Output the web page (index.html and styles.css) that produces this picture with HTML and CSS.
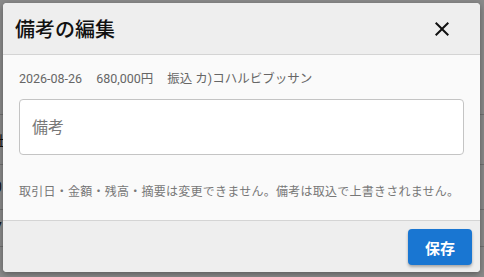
FILE: index.html
```html
<!DOCTYPE html>
<html lang="ja">
<head>
    <meta charset="UTF-8">
    <meta name="viewport" content="width=device-width, initial-scale=1.0">
    <title>備考の編集</title>
    <link rel="stylesheet" href="styles.css">
</head>
<body>

    <!-- page behind the dialog -->
    <div class="page">
        <div class="row" style="height: 115px"></div>
        <div class="row" style="height: 50px"><span>士</span></div>
        <div class="row" style="height: 45px"><span>0</span></div>
        <div class="row" style="height: 37px"><span>7</span></div>
    </div>

    <div class="overlay">
        <div class="dialog">
            <div class="dialog-header">
                <h2 class="dialog-title">備考の編集</h2>
                <button class="close-btn" aria-label="閉じる">
                    <svg width="24" height="24" viewBox="0 0 24 24">
                        <path d="M19 6.41 17.59 5 12 10.59 6.41 5 5 6.41 10.59 12 5 17.59 6.41 19 12 13.41 17.59 19 19 17.59 13.41 12z" fill="#111"/>
                    </svg>
                </button>
            </div>

            <div class="dialog-body">
                <div class="meta">
                    <span>2026-08-26</span>
                    <span>680,000円</span>
                    <span>振込 カ)コハルビブッサン</span>
                </div>
                <input class="memo-input" type="text" placeholder="備考">
                <p class="note">取引日・金額・残高・摘要は変更できません。備考は取込で上書きされません。</p>
            </div>

            <div class="dialog-footer">
                <button class="save-btn">保存</button>
            </div>
        </div>
    </div>

</body>
</html>
```

FILE: styles.css
```css
body {
    margin: 0;
    font-family: Roboto, "Noto Sans CJK JP", sans-serif;
    background: #ffffff;
    width: 484px;
    height: 277px;
    overflow: hidden;
    position: relative;
}
.page {
    font-size: 14px;
    color: #222;
}
.row {
    border-bottom: 1px solid #d0d0d0;
    box-sizing: border-box;
    display: flex;
    align-items: center;
}
.row span {
    margin-left: -6px;
}
.overlay {
    position: absolute;
    inset: 0;
    background: rgba(0, 0, 0, 0.46);
    padding: 3px 4px 5px 3px;
    box-sizing: border-box;
    display: flex;
}
.dialog {
    flex: 1;
    display: flex;
    flex-direction: column;
    background: #fafafa;
    border-radius: 4px;
    overflow: hidden;
    box-shadow: 0 2px 6px rgba(0, 0, 0, 0.35);
}
.dialog-header {
    height: 52px;
    background: #eeeeee;
    border-bottom: 1px solid #d4d4d4;
    display: flex;
    align-items: center;
    justify-content: space-between;
    padding: 0 26px 0 12px;
    box-sizing: border-box;
}
.dialog-title {
    margin: 0;
    font-size: 20px;
    font-weight: 500;
    color: #111;
}
.close-btn {
    background: none;
    border: none;
    padding: 0;
    width: 24px;
    height: 24px;
    cursor: pointer;
}
.dialog-body {
    flex: 1;
    padding: 15px 16px 0 16px;
}
.meta {
    display: flex;
    gap: 14px;
    font-size: 12.5px;
    line-height: 18px;
    color: #666;
}
.memo-input {
    display: block;
    margin-top: 11px;
    width: 100%;
    height: 56px;
    box-sizing: border-box;
    border: 1px solid #c4c4c4;
    border-radius: 4px;
    background: #fff;
    padding: 0 12px;
    font-family: Roboto, "Noto Sans CJK JP", sans-serif;
    font-size: 16px;
}
.memo-input::placeholder {
    color: #777;
}
.note {
    margin: 28px 0 0 0;
    font-size: 12px;
    letter-spacing: 0.25px;
    line-height: 18px;
    color: #777;
}
.dialog-footer {
    height: 52px;
    box-sizing: border-box;
    background: #eeeeee;
    border-top: 1px solid #d4d4d4;
    display: flex;
    justify-content: flex-end;
    align-items: flex-start;
    padding: 8px 8px 0 0;
}
.save-btn {
    width: 64px;
    height: 36px;
    background: #1976d2;
    color: #fff;
    border: none;
    border-radius: 4px;
    font-family: Roboto, "Noto Sans CJK JP", sans-serif;
    font-size: 15px;
    font-weight: 700;
    box-shadow: 0 2px 3px rgba(0, 0, 0, 0.3);
    cursor: pointer;
}
```
